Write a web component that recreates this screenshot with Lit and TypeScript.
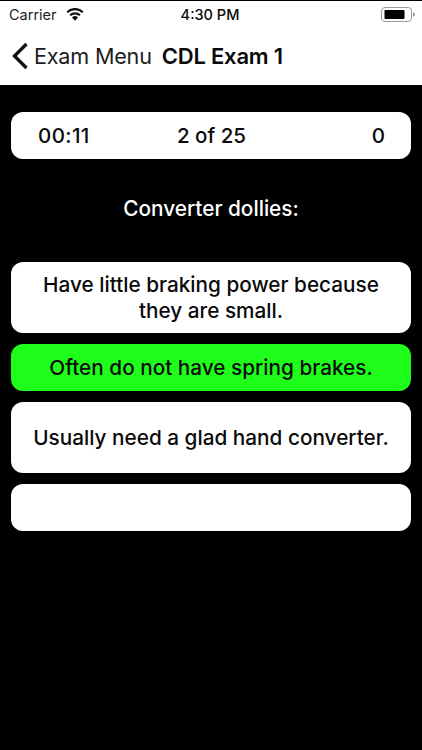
import { LitElement, html, css } from "lit";
import { customElement } from "lit/decorators.js";

@customElement("app-root")
export class AppRoot extends LitElement {
  static styles = css`
    :host { display: block; width: 422px; height: 750px; background: #000; font-family: Inter, "Liberation Sans", sans-serif; color: #0a0a0a; overflow: hidden; }
    .top { background: #fff; margin-top: 1px; height: 84px; display: flex; flex-direction: column; }
    .status { height: 27px; display: grid; grid-template-columns: 1fr auto 1fr; align-items: center; padding: 0 11px 0 9px; font-size: 14.5px; }
    .left { display: flex; align-items: center; gap: 9px; color: #222; }
    .time { font-weight: 500; }
    .right { display: flex; justify-content: flex-end; align-items: center; margin-right: -4px; }
    .nav { flex: 1; display: flex; align-items: center; padding: 0 0 1px 11px; font-size: 21.6px; }
    .back { color: #1c1c1c; margin-left: 5px; letter-spacing: -0.2px; }
    .title { font-size: 22px; font-weight: 600; margin-left: 10px; letter-spacing: -0.2px; }
    .main { padding: 27px 11px 0; display: flex; flex-direction: column; }
    .card { background: #fff; border-radius: 12px; min-height: 47px; display: flex; align-items: center; justify-content: center; text-align: center; font-size: 20.75px; font-weight: 500; line-height: 26px; padding: 1px 20px 0; box-sizing: border-box; }
    .stats { display: grid; grid-template-columns: 1fr auto 1fr; padding: 0 26px 0 27px; font-size: 20.5px; font-weight: 500; }
    .stats span:first-child { text-align: left; letter-spacing: 0.4px; }
    .stats span:last-child { text-align: right; }
    .question { color: #fff; text-align: center; font-size: 20.8px; font-weight: 500; height: 103px; padding-bottom: 5px; box-sizing: border-box; display: flex; align-items: center; justify-content: center; }
    .answers { display: flex; flex-direction: column; gap: 11px; }
    .tall { min-height: 71px; }
    .green { background: #1ffe1a; }
  `;

  render() {
    return html`
      <div class="top">
        <div class="status">
          <div class="left">
            <span>Carrier</span>
            <svg width="18" height="13" viewBox="0 0 18 13" aria-hidden="true">
              <path d="M9 12.8 L6 9.4 A4.4 4.4 0 0 1 12 9.4 Z" fill="#111"/>
              <path d="M4.1 7.3 A7 7 0 0 1 13.9 7.3" fill="none" stroke="#111" stroke-width="2.2"/>
              <path d="M1.2 4.3 A11 11 0 0 1 16.8 4.3" fill="none" stroke="#111" stroke-width="2.2"/>
            </svg>
          </div>
          <span class="time">4:30 PM</span>
          <div class="right">
            <svg width="34" height="15" viewBox="0 0 34 15" aria-hidden="true">
              <rect x="0.5" y="0.5" width="30" height="14" rx="3.5" fill="none" stroke="#999"/>
              <rect x="3.5" y="3" width="20" height="9" rx="1" fill="#000"/>
              <path d="M32 5.5 A2 2 0 0 1 32 9.5 Z" fill="#999"/>
            </svg>
          </div>
        </div>
        <div class="nav">
          <svg width="18" height="28" viewBox="0 0 18 28" aria-hidden="true">
            <path d="M15.5 2 L3.5 14 L15.5 26" fill="none" stroke="#111" stroke-width="3.4"/>
          </svg>
          <span class="back">Exam Menu</span>
          <span class="title">CDL Exam 1</span>
        </div>
      </div>
      <div class="main">
        <div class="card stats"><span>00:11</span><span>2 of 25</span><span>0</span></div>
        <div class="question">Converter dollies:</div>
        <div class="answers">
          <div class="card tall">Have little braking power because they are small.</div>
          <div class="card green">Often do not have spring brakes.</div>
          <div class="card tall">Usually need a glad hand converter.</div>
          <div class="card"></div>
        </div>
      </div>
    `;
  }
}
